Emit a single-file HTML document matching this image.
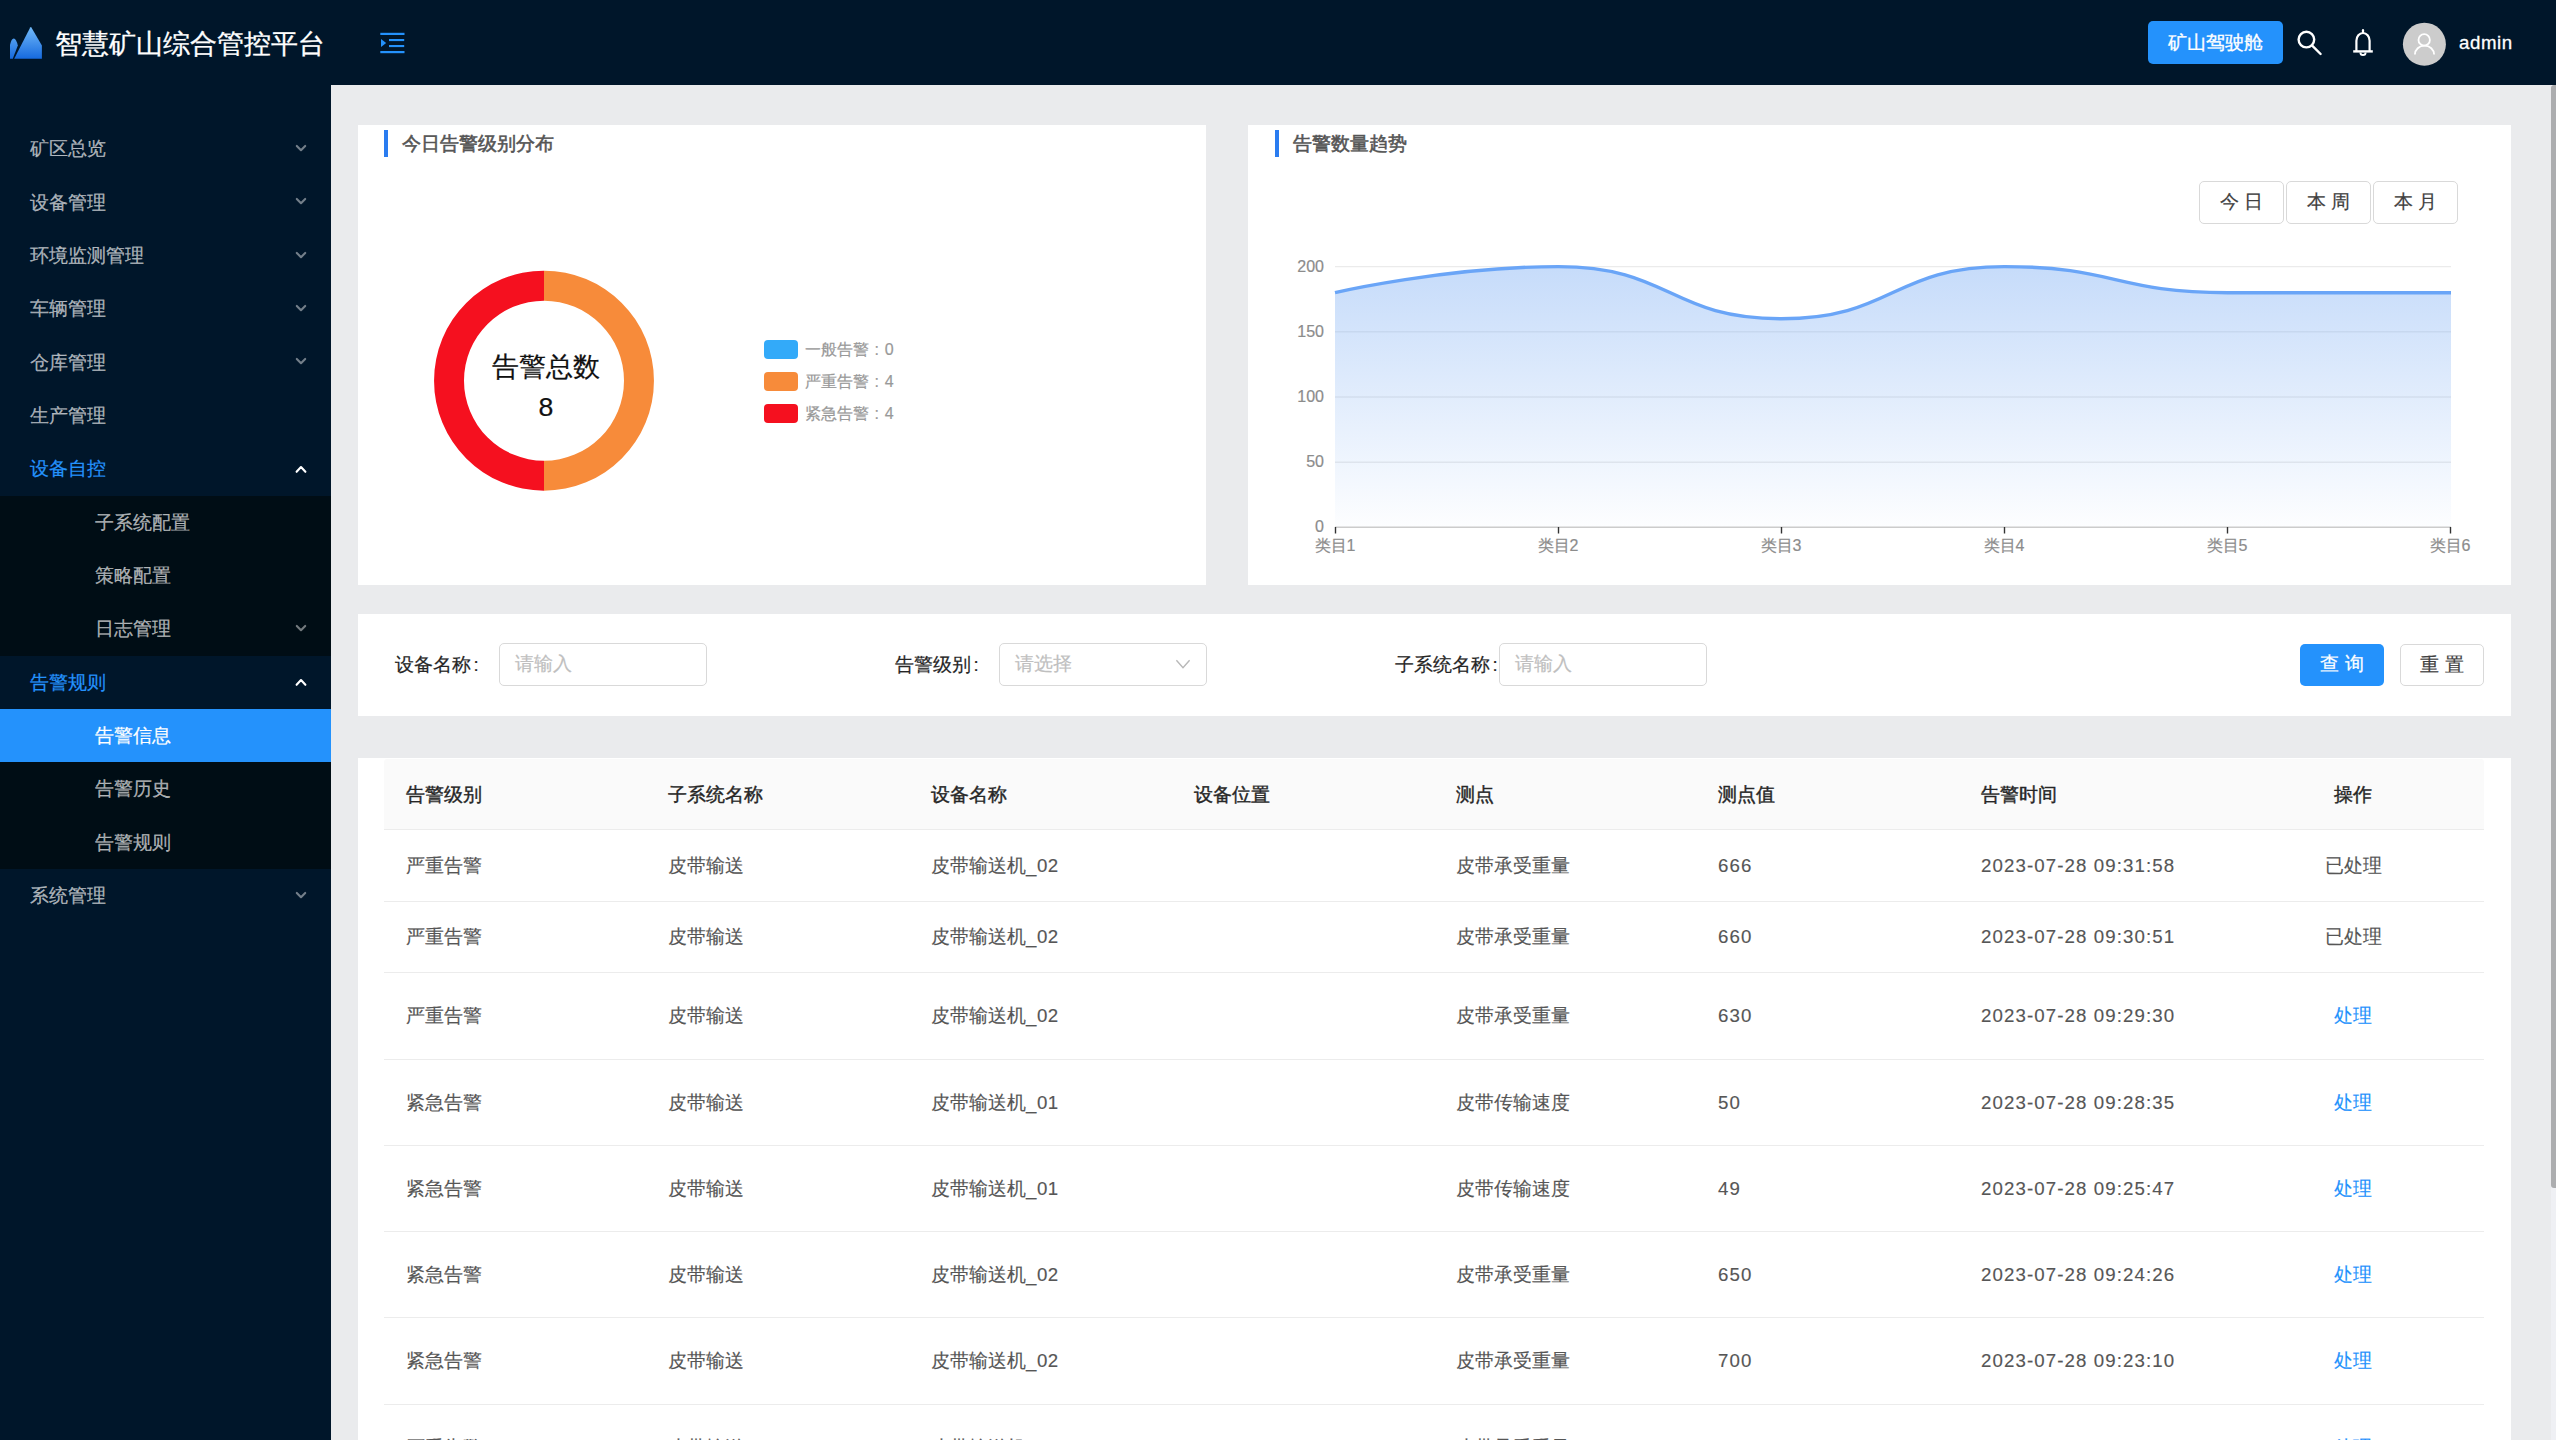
<!DOCTYPE html>
<html><head><meta charset="utf-8">
<style>
*{margin:0;padding:0;box-sizing:border-box}
html,body{width:2556px;height:1440px;overflow:hidden;background:#eaebed;font-family:"Liberation Sans",sans-serif}
body div{-webkit-text-stroke-width:0.2px}
.abs{position:absolute}
#hdr{position:absolute;left:0;top:0;width:2556px;height:85px;background:#00162a}
#side{position:absolute;left:0;top:85px;width:331px;height:1355px;background:#00162a;overflow:hidden}
#side .inner{position:absolute;left:0;top:-85px;width:331px;height:1440px}
.subbg{position:absolute;left:0;width:331px;background:#000d15}
.selbg{position:absolute;left:0;width:331px;background:#2492fc}
.mi{position:absolute;height:53.333px;line-height:53.333px;font-size:18.667px;white-space:nowrap}
.arr{position:absolute;left:291px}
#main{position:absolute;left:331px;top:85px;width:2225px;height:1355px;background:#eaebed}
.card{position:absolute;background:#fff}
.ctitle{position:absolute;font-size:18.667px;-webkit-text-stroke:0.55px #555;color:#555;height:27px;line-height:27px;white-space:nowrap}
.cbar{position:absolute;width:4px;height:27px;background:#2a7cf0}
.lbl{position:absolute;font-size:18.667px;color:#262626;height:43px;line-height:43px;white-space:nowrap}
.inp{position:absolute;height:42.5px;border:1.2px solid #d9d9d9;border-radius:5px;background:#fff}
.ph{position:absolute;left:15px;top:0;line-height:40px;font-size:18.667px;color:#bfbfbf;white-space:nowrap}
.btn{position:absolute;height:42px;border-radius:3px;font-size:18.667px;line-height:40px;text-align:center;white-space:nowrap}
.th{position:absolute;font-size:18.667px;-webkit-text-stroke:0.4px #262626;color:#262626;top:775px;height:40px;line-height:40px;white-space:nowrap}
.td{position:absolute;font-size:18.667px;color:#565656;height:40px;line-height:40px;white-space:nowrap;-webkit-text-stroke-width:0.15px}
.sfx{letter-spacing:0.5px}
.num{letter-spacing:1.1px}
.op{left:2284px;width:138px;text-align:center}
.link{color:#2492fc}
.hline{position:absolute;left:384px;width:2100px;height:1.333px;background:#ececec}
.axl{position:absolute;font-size:16px;color:#8c8c8c;white-space:nowrap;line-height:20px}
.leg{position:absolute;left:805px;font-size:16px;color:#999;line-height:20px;white-space:nowrap}
.legsw{position:absolute;left:764px;width:34px;height:18.5px;border-radius:4px}
</style></head><body>
<div id="main"></div>
<div id="hdr">
  <svg class="abs" style="left:0;top:0" width="60" height="85" viewBox="0 0 60 85">
    <defs><linearGradient id="lg" x1="0" y1="0" x2="0" y2="1">
      <stop offset="0" stop-color="#72baf9"/><stop offset="1" stop-color="#1569de"/></linearGradient>
      <linearGradient id="lg2" gradientUnits="userSpaceOnUse" x1="0" y1="27" x2="0" y2="59">
      <stop offset="0" stop-color="#72baf9"/><stop offset="1" stop-color="#1569de"/></linearGradient></defs>
    <path d="M14.2,58.8 L30.2,27.4 Q30.8,26.6 31.4,27.4 L41.9,45.4 L41.9,58.8 Z" fill="url(#lg2)"/>
    <path d="M10,58.8 L10,45 Q11.5,38.5 13.8,38.6 Q16.3,39 17.8,45.6 L12.8,58.8 Z" fill="url(#lg2)"/>
  </svg>
  <div class="abs" style="left:55px;top:22.5px;height:43px;line-height:43px;font-size:27px;color:#fff;-webkit-text-stroke:0.3px #fff;white-space:nowrap">智慧矿山综合管控平台</div>
  <svg class="abs" style="left:370px;top:20px" width="50" height="45" viewBox="370 20 50 45">
    <rect x="380.3" y="32.8" width="24.2" height="2.2" fill="#2492fc"/>
    <rect x="389" y="39" width="15.2" height="2.1" fill="#2492fc"/>
    <rect x="389" y="45" width="15.2" height="2.1" fill="#2492fc"/>
    <rect x="380.3" y="51" width="24.2" height="2.2" fill="#2492fc"/>
    <path d="M381,39 L386.2,43 L381,47 Z" fill="#2492fc"/>
  </svg>
  <div class="btn" style="left:2148px;top:21px;width:135px;height:43px;line-height:43px;background:#2492fc;color:#fff;border-radius:5px;-webkit-text-stroke:0.3px #fff">矿山驾驶舱</div>
  <svg class="abs" style="left:2290px;top:20px" width="100" height="50" viewBox="2290 20 100 50">
    <circle cx="2306.4" cy="39.6" r="7.8" fill="none" stroke="#fff" stroke-width="2.4"/>
    <path d="M2312.2,45.6 L2320.6,54" stroke="#fff" stroke-width="2.4" stroke-linecap="round"/>
    <path d="M2363,30.2 L2363,32.5" stroke="#fff" stroke-width="2.2" stroke-linecap="round"/>
    <path d="M2356.4,51 L2356.4,40.8 A6.6,7.8 0 0 1 2369.6,40.8 L2369.6,51" fill="none" stroke="#fff" stroke-width="2.2"/>
    <path d="M2353.2,51.4 L2372.8,51.4" stroke="#fff" stroke-width="2.4"/>
    <path d="M2360.4,52.4 A2.6,2.6 0 0 0 2365.6,52.4" fill="none" stroke="#fff" stroke-width="1.9"/>
  </svg>
  <svg class="abs" style="left:2395px;top:15px" width="60" height="60" viewBox="2395 15 60 60">
    <circle cx="2424.4" cy="44.2" r="21.5" fill="#cccccc"/>
    <circle cx="2424.2" cy="39.9" r="5.7" fill="none" stroke="#fff" stroke-width="1.8"/>
    <path d="M2414.9,54.6 A9.6,9 0 0 1 2434.1,54.6" fill="none" stroke="#fff" stroke-width="1.8"/>
  </svg>
  <div class="abs" style="left:2459px;top:22.8px;height:40px;line-height:40px;font-size:18.667px;color:#fff;letter-spacing:0.6px;-webkit-text-stroke:0.3px #fff">admin</div>
</div>
<div id="side"><div class="inner">
<div class="subbg" style="top:495.666px;height:160.000px"></div>
<div class="subbg" style="top:709.000px;height:160.000px"></div>
<div class="mi" style="top:122.333px;left:30px;color:rgba(255,255,255,0.65)">矿区总览</div>
<svg class="arr" style="top:140.99994999999998px" width="24" height="16" viewBox="0 0 24 16"><path d="M5.8,4.9 L10,9.2 L14.2,4.9" fill="none" stroke="rgba(255,255,255,0.45)" stroke-width="2.1" stroke-linecap="round" stroke-linejoin="round"/></svg>
<div class="mi" style="top:175.667px;left:30px;color:rgba(255,255,255,0.65)">设备管理</div>
<svg class="arr" style="top:194.33325px" width="24" height="16" viewBox="0 0 24 16"><path d="M5.8,4.9 L10,9.2 L14.2,4.9" fill="none" stroke="rgba(255,255,255,0.45)" stroke-width="2.1" stroke-linecap="round" stroke-linejoin="round"/></svg>
<div class="mi" style="top:229.000px;left:30px;color:rgba(255,255,255,0.65)">环境监测管理</div>
<svg class="arr" style="top:247.66655px" width="24" height="16" viewBox="0 0 24 16"><path d="M5.8,4.9 L10,9.2 L14.2,4.9" fill="none" stroke="rgba(255,255,255,0.45)" stroke-width="2.1" stroke-linecap="round" stroke-linejoin="round"/></svg>
<div class="mi" style="top:282.333px;left:30px;color:rgba(255,255,255,0.65)">车辆管理</div>
<svg class="arr" style="top:300.99985px" width="24" height="16" viewBox="0 0 24 16"><path d="M5.8,4.9 L10,9.2 L14.2,4.9" fill="none" stroke="rgba(255,255,255,0.45)" stroke-width="2.1" stroke-linecap="round" stroke-linejoin="round"/></svg>
<div class="mi" style="top:335.666px;left:30px;color:rgba(255,255,255,0.65)">仓库管理</div>
<svg class="arr" style="top:354.33315px" width="24" height="16" viewBox="0 0 24 16"><path d="M5.8,4.9 L10,9.2 L14.2,4.9" fill="none" stroke="rgba(255,255,255,0.45)" stroke-width="2.1" stroke-linecap="round" stroke-linejoin="round"/></svg>
<div class="mi" style="top:389.000px;left:30px;color:rgba(255,255,255,0.65)">生产管理</div>
<div class="mi" style="top:442.333px;left:30px;color:#2492fc">设备自控</div>
<svg class="arr" style="top:460.99975px" width="24" height="16" viewBox="0 0 24 16"><path d="M5.6,10.8 L10,6 L14.4,10.8" fill="none" stroke="#fff" stroke-width="2.1" stroke-linecap="round" stroke-linejoin="round"/></svg>
<div class="mi" style="top:495.666px;left:95px;color:rgba(255,255,255,0.65)">子系统配置</div>
<div class="mi" style="top:549.000px;left:95px;color:rgba(255,255,255,0.65)">策略配置</div>
<div class="mi" style="top:602.333px;left:95px;color:rgba(255,255,255,0.65)">日志管理</div>
<svg class="arr" style="top:620.99965px" width="24" height="16" viewBox="0 0 24 16"><path d="M5.8,4.9 L10,9.2 L14.2,4.9" fill="none" stroke="rgba(255,255,255,0.45)" stroke-width="2.1" stroke-linecap="round" stroke-linejoin="round"/></svg>
<div class="mi" style="top:655.666px;left:30px;color:#2492fc">告警规则</div>
<svg class="arr" style="top:674.33295px" width="24" height="16" viewBox="0 0 24 16"><path d="M5.6,10.8 L10,6 L14.4,10.8" fill="none" stroke="#fff" stroke-width="2.1" stroke-linecap="round" stroke-linejoin="round"/></svg>
<div class="selbg" style="top:709.000px;height:53.333px"></div>
<div class="mi" style="top:709.000px;left:95px;color:#fff">告警信息</div>
<div class="mi" style="top:762.333px;left:95px;color:rgba(255,255,255,0.65)">告警历史</div>
<div class="mi" style="top:815.666px;left:95px;color:rgba(255,255,255,0.65)">告警规则</div>
<div class="mi" style="top:869.000px;left:30px;color:rgba(255,255,255,0.65)">系统管理</div>
<svg class="arr" style="top:887.66615px" width="24" height="16" viewBox="0 0 24 16"><path d="M5.8,4.9 L10,9.2 L14.2,4.9" fill="none" stroke="rgba(255,255,255,0.45)" stroke-width="2.1" stroke-linecap="round" stroke-linejoin="round"/></svg>
</div></div>

<!-- card 1 -->
<div class="card" style="left:358px;top:125px;width:848px;height:460px"></div>
<div class="cbar" style="left:384px;top:130px"></div>
<div class="ctitle" style="left:402px;top:130px">今日告警级别分布</div>
<svg class="abs" style="left:424px;top:260px" width="240" height="240" viewBox="424 260 240 240">
  <path d="M544,270.7 A110,110 0 0 1 544,490.7 L544,460.7 A80,80 0 0 0 544,300.7 Z" fill="#f78b3a"/>
  <path d="M544,490.7 A110,110 0 0 1 544,270.7 L544,300.7 A80,80 0 0 0 544,460.7 Z" fill="#f5101f"/>
</svg>
<div class="abs" style="left:444px;top:347px;width:204px;text-align:center;font-size:26.667px;line-height:40px;color:#111">告警总数</div>
<div class="abs" style="left:444px;top:387px;width:204px;text-align:center;font-size:26.667px;line-height:40px;color:#111">8</div>
<div class="legsw" style="top:340px;background:#33aaf9"></div>
<div class="legsw" style="top:372.3px;background:#f78b3a"></div>
<div class="legsw" style="top:404px;background:#f5101f"></div>
<div class="leg" style="top:339.5px">一般告警 <span style="margin-left:1px">:</span> <span style="margin-left:1.5px">0</span></div>
<div class="leg" style="top:372px">严重告警 <span style="margin-left:1px">:</span> <span style="margin-left:1.5px">4</span></div>
<div class="leg" style="top:404px">紧急告警 <span style="margin-left:1px">:</span> <span style="margin-left:1.5px">4</span></div>

<!-- card 2 -->
<div class="card" style="left:1248px;top:125px;width:1263px;height:460px"></div>
<div class="cbar" style="left:1275px;top:130px"></div>
<div class="ctitle" style="left:1293px;top:130px">告警数量趋势</div>
<div class="btn" style="left:2199px;top:181px;width:84.5px;height:42.5px;border:1.2px solid #d9d9d9;color:#404040;background:#fff;border-radius:5px">今 日</div>
<div class="btn" style="left:2286px;top:181px;width:84.5px;height:42.5px;border:1.2px solid #d9d9d9;color:#404040;background:#fff;border-radius:5px">本 周</div>
<div class="btn" style="left:2373px;top:181px;width:84.5px;height:42.5px;border:1.2px solid #d9d9d9;color:#404040;background:#fff;border-radius:5px">本 月</div>
<svg class="abs" style="left:1248px;top:125px" width="1263" height="459" viewBox="1248 125 1263 459">
  <defs><linearGradient id="ag" gradientUnits="userSpaceOnUse" x1="0" y1="266" x2="0" y2="527">
    <stop offset="0" stop-color="#8db8f5" stop-opacity="0.5"/><stop offset="1" stop-color="#8db8f5" stop-opacity="0.02"/></linearGradient></defs>
  <g stroke="#ebebeb" stroke-width="1.4">
    <path d="M1335,266.6 H2451"/><path d="M1335,331.8 H2451"/><path d="M1335,397 H2451"/><path d="M1335,462.2 H2451"/>
  </g>
  <path d="M1335.00,292.68 C1335.00,292.68 1447.71,266.60 1558.20,266.60 C1670.91,266.60 1669.80,318.76 1781.40,318.76 C1893.00,318.76 1891.89,266.60 2004.60,266.60 C2115.09,266.60 2115.82,292.68 2227.80,292.68 C2339.02,292.68 2451.00,292.68 2451.00,292.68 L2451,527.4 L1335,527.4 Z" fill="url(#ag)"/>
  <path d="M1335.00,292.68 C1335.00,292.68 1447.71,266.60 1558.20,266.60 C1670.91,266.60 1669.80,318.76 1781.40,318.76 C1893.00,318.76 1891.89,266.60 2004.60,266.60 C2115.09,266.60 2115.82,292.68 2227.80,292.68 C2339.02,292.68 2451.00,292.68 2451.00,292.68" fill="none" stroke="#6aa5f7" stroke-width="3.4"/>
  <path d="M1335,527.3 H2451" stroke="#cccccc" stroke-width="1.4"/>
  <g stroke="#333" stroke-width="1.4">
    <path d="M1335.5,527 V533.5"/><path d="M1558.5,527 V533.5"/><path d="M1781.5,527 V533.5"/><path d="M2004.5,527 V533.5"/><path d="M2227.5,527 V533.5"/><path d="M2450.5,527 V533.5"/>
  </g>
</svg>
<div class="axl" style="left:1224px;top:256.5px;width:100px;text-align:right">200</div>
<div class="axl" style="left:1224px;top:322px;width:100px;text-align:right">150</div>
<div class="axl" style="left:1224px;top:386.7px;width:100px;text-align:right">100</div>
<div class="axl" style="left:1224px;top:452px;width:100px;text-align:right">50</div>
<div class="axl" style="left:1224px;top:517px;width:100px;text-align:right">0</div>
<div class="axl" style="left:1285px;top:535.7px;width:100px;text-align:center">类目1</div>
<div class="axl" style="left:1508px;top:535.7px;width:100px;text-align:center">类目2</div>
<div class="axl" style="left:1731px;top:535.7px;width:100px;text-align:center">类目3</div>
<div class="axl" style="left:1954px;top:535.7px;width:100px;text-align:center">类目4</div>
<div class="axl" style="left:2177px;top:535.7px;width:100px;text-align:center">类目5</div>
<div class="axl" style="left:2400px;top:535.7px;width:100px;text-align:center">类目6</div>

<!-- filter card -->
<div class="card" style="left:358px;top:613.5px;width:2153px;height:102px"></div>
<div class="lbl" style="left:395px;top:642.5px">设备名称</div><div class="lbl" style="left:473.5px;top:642.5px">:</div>
<div class="inp" style="left:499px;top:643px;width:208px"><div class="ph">请输入</div></div>
<div class="lbl" style="left:895px;top:642.5px">告警级别</div><div class="lbl" style="left:973.5px;top:642.5px">:</div>
<div class="inp" style="left:999px;top:643px;width:208px"><div class="ph">请选择</div>
  <svg class="abs" style="left:-1.333px;top:-1.333px" width="208" height="43" viewBox="999 643 208 43"><path d="M1176.4,660.3 L1183,667.6 L1189.6,660.3" fill="none" stroke="#b8b8b8" stroke-width="1.4"/></svg></div>
<div class="lbl" style="left:1395px;top:642.5px">子系统名称</div><div class="lbl" style="left:1492.5px;top:642.5px">:</div>
<div class="inp" style="left:1499px;top:643px;width:208px"><div class="ph">请输入</div></div>
<div class="btn" style="left:2300px;top:644px;width:84px;background:#2492fc;color:#fff;border-radius:5px;-webkit-text-stroke:0.25px #fff">查 询</div>
<div class="btn" style="left:2400px;top:644px;width:84px;border:1.2px solid #d9d9d9;color:#404040;background:#fff;border-radius:5px">重 置</div>

<!-- table card -->
<div class="card" style="left:358px;top:758px;width:2153px;height:700px"></div>
<div class="abs" style="left:384px;top:759px;width:2100px;height:70px;background:#fafafa;border-radius:3px 3px 0 0"></div>
<div class="hline" style="top:828.7px"></div>
<div class="th" style="left:406px">告警级别</div>
<div class="th" style="left:668px">子系统名称</div>
<div class="th" style="left:931px">设备名称</div>
<div class="th" style="left:1194px">设备位置</div>
<div class="th" style="left:1456px">测点</div>
<div class="th" style="left:1718px">测点值</div>
<div class="th" style="left:1981px">告警时间</div>
<div class="th" style="left:2284px;width:138px;text-align:center">操作</div>
<div class="td" style="left:406px;top:845.5px">严重告警</div>
<div class="td" style="left:668px;top:845.5px">皮带输送</div>
<div class="td" style="left:931px;top:845.5px">皮带输送机<span class="sfx">_02</span></div>
<div class="td" style="left:1456px;top:845.5px">皮带承受重量</div>
<div class="td num" style="left:1718px;top:845.5px">666</div>
<div class="td num" style="left:1981px;top:845.5px">2023-07-28 09:31:58</div>
<div class="td op" style="top:845.5px">已处理</div>
<div class="hline" style="top:901px"></div>
<div class="td" style="left:406px;top:917.0px">严重告警</div>
<div class="td" style="left:668px;top:917.0px">皮带输送</div>
<div class="td" style="left:931px;top:917.0px">皮带输送机<span class="sfx">_02</span></div>
<div class="td" style="left:1456px;top:917.0px">皮带承受重量</div>
<div class="td num" style="left:1718px;top:917.0px">660</div>
<div class="td num" style="left:1981px;top:917.0px">2023-07-28 09:30:51</div>
<div class="td op" style="top:917.0px">已处理</div>
<div class="hline" style="top:972px"></div>
<div class="td" style="left:406px;top:996.0px">严重告警</div>
<div class="td" style="left:668px;top:996.0px">皮带输送</div>
<div class="td" style="left:931px;top:996.0px">皮带输送机<span class="sfx">_02</span></div>
<div class="td" style="left:1456px;top:996.0px">皮带承受重量</div>
<div class="td num" style="left:1718px;top:996.0px">630</div>
<div class="td num" style="left:1981px;top:996.0px">2023-07-28 09:29:30</div>
<div class="td op link" style="top:996.0px">处理</div>
<div class="hline" style="top:1059px"></div>
<div class="td" style="left:406px;top:1082.5px">紧急告警</div>
<div class="td" style="left:668px;top:1082.5px">皮带输送</div>
<div class="td" style="left:931px;top:1082.5px">皮带输送机<span class="sfx">_01</span></div>
<div class="td" style="left:1456px;top:1082.5px">皮带传输速度</div>
<div class="td num" style="left:1718px;top:1082.5px">50</div>
<div class="td num" style="left:1981px;top:1082.5px">2023-07-28 09:28:35</div>
<div class="td op link" style="top:1082.5px">处理</div>
<div class="hline" style="top:1145px"></div>
<div class="td" style="left:406px;top:1168.5px">紧急告警</div>
<div class="td" style="left:668px;top:1168.5px">皮带输送</div>
<div class="td" style="left:931px;top:1168.5px">皮带输送机<span class="sfx">_01</span></div>
<div class="td" style="left:1456px;top:1168.5px">皮带传输速度</div>
<div class="td num" style="left:1718px;top:1168.5px">49</div>
<div class="td num" style="left:1981px;top:1168.5px">2023-07-28 09:25:47</div>
<div class="td op link" style="top:1168.5px">处理</div>
<div class="hline" style="top:1231px"></div>
<div class="td" style="left:406px;top:1254.5px">紧急告警</div>
<div class="td" style="left:668px;top:1254.5px">皮带输送</div>
<div class="td" style="left:931px;top:1254.5px">皮带输送机<span class="sfx">_02</span></div>
<div class="td" style="left:1456px;top:1254.5px">皮带承受重量</div>
<div class="td num" style="left:1718px;top:1254.5px">650</div>
<div class="td num" style="left:1981px;top:1254.5px">2023-07-28 09:24:26</div>
<div class="td op link" style="top:1254.5px">处理</div>
<div class="hline" style="top:1317px"></div>
<div class="td" style="left:406px;top:1341.0px">紧急告警</div>
<div class="td" style="left:668px;top:1341.0px">皮带输送</div>
<div class="td" style="left:931px;top:1341.0px">皮带输送机<span class="sfx">_02</span></div>
<div class="td" style="left:1456px;top:1341.0px">皮带承受重量</div>
<div class="td num" style="left:1718px;top:1341.0px">700</div>
<div class="td num" style="left:1981px;top:1341.0px">2023-07-28 09:23:10</div>
<div class="td op link" style="top:1341.0px">处理</div>
<div class="hline" style="top:1404px"></div>
<div class="td" style="left:406px;top:1427.5px">严重告警</div>
<div class="td" style="left:668px;top:1427.5px">皮带输送</div>
<div class="td" style="left:931px;top:1427.5px">皮带输送机<span class="sfx">_02</span></div>
<div class="td" style="left:1456px;top:1427.5px">皮带承受重量</div>
<div class="td num" style="left:1718px;top:1427.5px">680</div>
<div class="td num" style="left:1981px;top:1427.5px">2023-07-28 09:22:01</div>
<div class="td op link" style="top:1427.5px">处理</div>
<div class="hline" style="top:1490px"></div>

<!-- scrollbar -->
<div class="abs" style="left:2551px;top:85px;width:5px;height:1355px;background:#eff0f4"></div>
<div class="abs" style="left:2551px;top:85px;width:5px;height:1103px;background:#acadaf;border-radius:3px 0 0 3px"></div>
</body></html>
